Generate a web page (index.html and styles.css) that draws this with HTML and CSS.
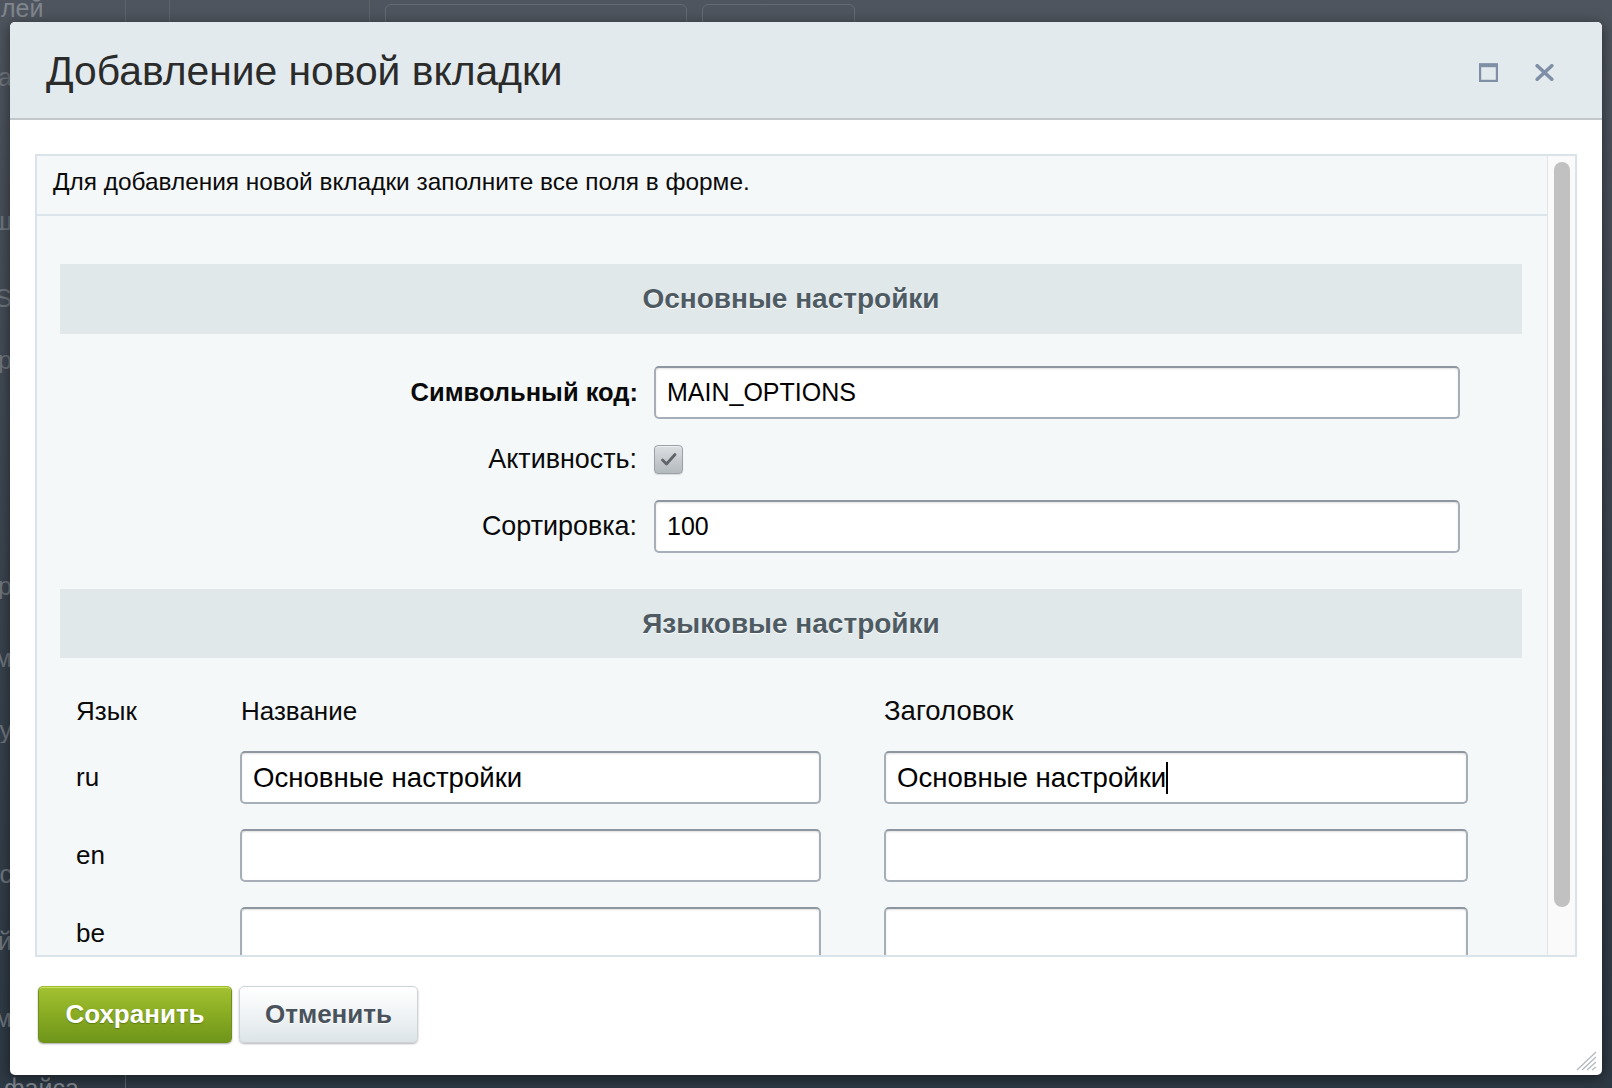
FILE: index.html
```html
<!DOCTYPE html>
<html lang="ru">
<head>
<meta charset="utf-8">
<title>Добавление новой вкладки</title>
<link rel="stylesheet" href="styles.css">
</head>
<body>
<div class="backdrop">
  <div class="bg-top">
    <span class="bg-cell c1">лей</span>
    <span class="bg-cell c2"></span>
    <span class="bg-cell c3"></span>
    <span class="bg-tab t1"></span>
    <span class="bg-tab t2"></span>
  </div>
  <div class="bg-left">
    <span class="bg-w">аза</span>
    <span class="bg-w">иш</span>
    <span class="bg-w">ES</span>
    <span class="bg-w">ор</span>
    <span class="bg-w">ор</span>
    <span class="bg-w">им</span>
    <span class="bg-w">ду</span>
    <span class="bg-w">ес</span>
    <span class="bg-w">ий</span>
    <span class="bg-w">ам</span>
  </div>
  <div class="bg-bottom">
    <span class="bg-cell c1">файса</span>
  </div>
</div>

<div class="dialog">
  <div class="dlg-head">
    <h1 class="dlg-title">Добавление новой вкладки</h1>
    <div class="dlg-icons">
      <svg class="ico-max" width="19" height="19" viewBox="0 0 19 19"><rect x="1.1" y="1.5" width="16.8" height="16.4" fill="none" stroke="#7f8fa6" stroke-width="2.2"/><rect x="0" y="0.4" width="19" height="3.8" fill="#7f8fa6"/></svg>
      <svg class="ico-close" width="19" height="17" viewBox="0 0 19 17"><path d="M2.2 1.7 L16.8 15.3 M16.8 1.7 L2.2 15.3" stroke="#7f8fa6" stroke-width="3.6" stroke-linecap="round"/></svg>
    </div>
  </div>

  <div class="dlg-body">
    <div class="frame">
      <div class="frame-content">
        <div class="notice">Для добавления новой вкладки заполните все поля в форме.</div>
        <div class="form">
          <div class="section-title">Основные настройки</div>
          <div class="fields">
            <label class="f-label f-bold">Символьный код:</label>
            <input class="input f-input" type="text" value="MAIN_OPTIONS">
            <label class="f-label">Активность:</label>
            <span class="checkbox"><svg width="29" height="29" viewBox="0 0 29 29"><path d="M8.5 15 L12.5 19 L21 9.5" fill="none" stroke="#5f656b" stroke-width="2.8" stroke-linecap="round" stroke-linejoin="round"/></svg></span>
            <label class="f-label">Сортировка:</label>
            <input class="input f-input" type="text" value="100">
          </div>
          <div class="section-title section-2">Языковые настройки</div>
          <div class="lang-head">
            <span class="lang-code">Язык</span>
            <span class="lh-name">Название</span>
            <span class="lh-title">Заголовок</span>
          </div>
          <div class="lang-rows">
            <span class="lang-code">ru</span>
            <input class="input l-input" type="text" value="Основные настройки">
            <div class="input l-input l-input-2 focused">Основные настройки<span class="caret"></span></div>
            <span class="lang-code">en</span>
            <input class="input l-input" type="text" value="">
            <input class="input l-input l-input-2" type="text" value="">
            <span class="lang-code">be</span>
            <input class="input l-input" type="text" value="">
            <input class="input l-input l-input-2" type="text" value="">
          </div>
        </div>
      </div>
      <div class="scrollbar"><div class="thumb"></div></div>
    </div>

    <div class="buttons">
      <button class="btn btn-save" type="button">Сохранить</button>
      <button class="btn btn-cancel" type="button">Отменить</button>
    </div>
  </div>

  <svg class="grip" width="24" height="22" viewBox="0 0 24 22"><path d="M22 3 L3 21 M22 8 L8 21 M22 13 L13 21 M22 18 L18 21" stroke="#b4b9be" stroke-width="1.3"/></svg>
</div>
</body>
</html>
```

FILE: styles.css
```css
* { box-sizing: border-box; margin: 0; padding: 0; }

html, body { width: 1612px; height: 1088px; }

body {
  position: relative;
  overflow: hidden;
  background: linear-gradient(180deg, #4f555e 0%, #3d4651 45%, #2d3944 100%);
  font-family: "Liberation Sans", Arial, sans-serif;
  color: #000;
}

/* page behind the modal */
.backdrop { position: absolute; inset: 0; color: #80868e; font-size: 25px; }
.bg-top { display: flex; height: 22px; }
.bg-cell { display: block; height: 100%; overflow: hidden; border-right: 1px solid #5d646c; line-height: 16px; }
.bg-top .c1 { width: 126px; padding-left: 1px; }
.bg-top .c2 { width: 44px; }
.bg-top .c3 { width: 200px; }
.bg-tab { display: block; margin-top: 4px; height: 30px; border: 1px solid #646b73; border-radius: 6px; background: #4e555e; }
.t1 { width: 302px; margin-left: 15px; }
.t2 { width: 153px; margin-left: 15px; }
.bg-bottom { position: absolute; left: 0; bottom: 0; height: 13px; display: flex; }
.bg-bottom .c1 { width: 126px; line-height: 26px; padding-left: 4px; }

.bg-left {
  position: absolute;
  left: 0;
  top: 0;
  width: 12px;
  padding-top: 64px;
  display: grid;
  grid-template-rows: 144px 77px 62px 226px 72px 72px 144px 67px 77px 26px;
  color: #6f767e;
}
.bg-w {
  display: flex;
  justify-content: flex-end;
  overflow: hidden;
  height: 26px;
  line-height: 26px;
  white-space: nowrap;
}

/* dialog */
.dialog {
  position: absolute;
  left: 10px;
  top: 22px;
  width: 1592px;
  height: 1053px;
  background: #fff;
  border-radius: 5px;
  box-shadow: 0 3px 14px rgba(0, 0, 0, 0.5);
  display: flex;
  flex-direction: column;
  overflow: hidden;
}

.dlg-head {
  flex: none;
  height: 98px;
  background: #e2eaed;
  border-bottom: 2px solid #c2c7ca;
  display: flex;
  align-items: center;
  justify-content: space-between;
  padding: 0 48px 0 36px;
}

.dlg-title {
  font-size: 40.8px;
  font-weight: normal;
  color: #2b2b2b;
  line-height: 1;
  padding-top: 2px;
}

.dlg-icons { display: flex; align-items: center; gap: 37px; padding-top: 4px; }
.dlg-icons svg { display: block; }

.dlg-body {
  flex: 1;
  display: flex;
  flex-direction: column;
  padding: 34px 25px 0;
}

.frame {
  height: 803px;
  border: 2px solid #dae3e9;
  background: #f5f8f9;
  display: flex;
}

.frame-content { flex: 1; overflow: hidden; }

.scrollbar {
  flex: none;
  width: 28px;
  border-left: 1px solid #e2e5e7;
  background: #fafafa;
  padding: 6px 0 0 6px;
}

.thumb { width: 16px; height: 745px; border-radius: 8px; background: #c1c1c1; }

.notice {
  height: 60px;
  border-bottom: 2px solid #dce5eb;
  padding: 0 16px;
  font-size: 24.4px;
  line-height: 52px;
  color: #0a0a0a;
}

.form { padding: 48px 25px 0 23px; }

.section-title {
  height: 70px;
  background: #e0e8ea;
  text-align: center;
  font-size: 28px;
  font-weight: bold;
  line-height: 70px;
  color: #4e5b63;
  text-shadow: 0 1px 0 #fff;
}

.section-2 { margin-top: 36px; height: 69px; line-height: 69px; }

.fields {
  display: grid;
  grid-template-columns: 594px 806px;
  row-gap: 25px;
  align-items: center;
  margin-top: 32px;
}

.f-label {
  text-align: right;
  padding-right: 17px;
  font-size: 26.9px;
  color: #0a0a0a;
}

.f-bold { font-weight: bold; font-size: 25.5px; padding-right: 16px; }

.input {
  display: block;
  height: 53px;
  border: 2px solid #a6aeb7;
  border-top-color: #8e97a0;
  border-radius: 5px;
  background: #fff;
  box-shadow: inset 0 1px 2px rgba(0, 0, 0, 0.12);
  font-family: "Liberation Sans", Arial, sans-serif;
  font-size: 26px;
  color: #000;
  padding: 0 11px;
  outline: none;
}

.f-input { width: 806px; font-size: 25px; }
.l-input { width: 581px; font-size: 27.6px; }
.l-input-2 { width: 584px; }

.focused { line-height: 49px; white-space: nowrap; }
.caret { display: inline-block; width: 2px; height: 32px; background: #000; vertical-align: middle; margin-top: -4px; }

.checkbox {
  display: block;
  width: 29px;
  height: 29px;
  border: 1px solid #9ca1a7;
  border-radius: 4px;
  background: linear-gradient(180deg, #dcdfe2 0%, #c4c8cc 60%, #b4b9be 100%);
  box-shadow: inset 0 1px 0 rgba(255, 255, 255, 0.5), 0 1px 1px rgba(0, 0, 0, 0.12);
}
.checkbox svg { display: block; margin: -1px; }

.lang-head {
  display: grid;
  grid-template-columns: 180px 644px 584px;
  margin-top: 38px;
  height: 30px;
  line-height: 30px;
  font-size: 26px;
  color: #0a0a0a;
}

.lh-name { padding-left: 1px; }
.lh-title { font-size: 27.5px; }

.lang-rows {
  display: grid;
  grid-template-columns: 180px 644px 584px;
  row-gap: 25px;
  align-items: center;
  margin-top: 25px;
  font-size: 26px;
  color: #0a0a0a;
}

.lang-code { padding-left: 16px; }

.buttons {
  display: flex;
  gap: 7px;
  margin-top: 29px;
  padding-left: 3px;
}

.btn {
  height: 57px;
  border-radius: 5px;
  font-family: "Liberation Sans", Arial, sans-serif;
  font-size: 26px;
  font-weight: bold;
  text-align: center;
  cursor: pointer;
}

.btn-save {
  width: 194px;
  color: #fff;
  border: 1px solid #6f911c;
  border-top-color: #9dbb2a;
  background: linear-gradient(180deg, #a3c232 0%, #8eb025 40%, #6f951a 100%);
  box-shadow: inset 0 1px 0 rgba(220, 240, 120, 0.7), 0 1px 2px rgba(0, 0, 0, 0.35);
  text-shadow: 0 1px 1px rgba(60, 80, 0, 0.5);
}

.btn-cancel {
  width: 179px;
  color: #4a535c;
  border: 1px solid #cdd4d8;
  background: linear-gradient(180deg, #ffffff 0%, #eef2f4 55%, #dce4e8 100%);
  box-shadow: 0 1px 2px rgba(0, 0, 0, 0.3);
  text-shadow: 0 1px 0 #fff;
}

.grip { position: absolute; right: 4px; bottom: 4px; display: block; }
```
